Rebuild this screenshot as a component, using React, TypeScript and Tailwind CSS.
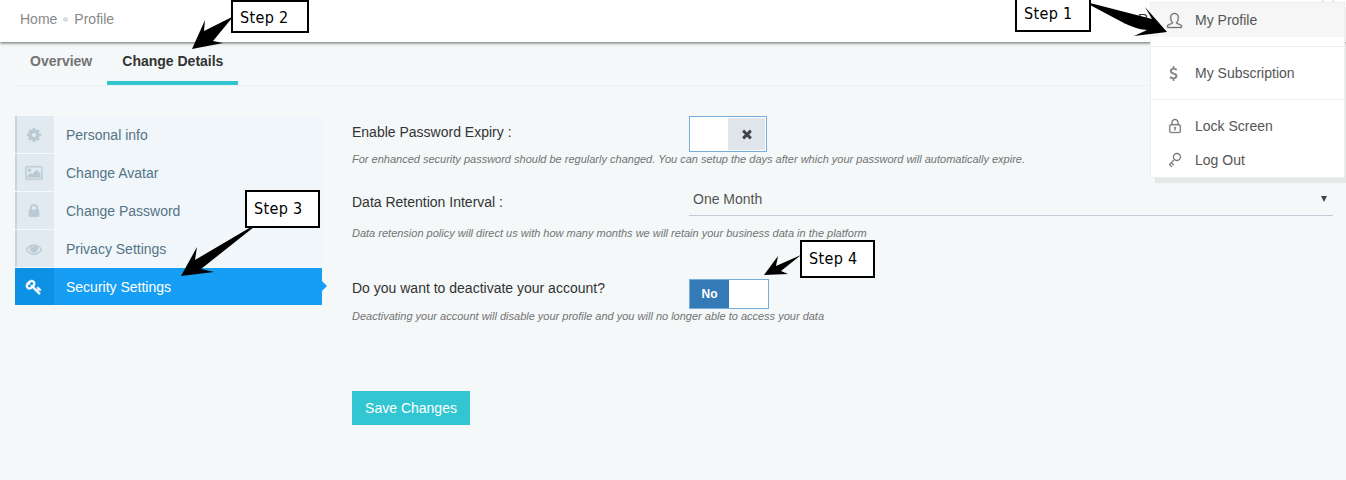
import React from "react";
import { SlUser, SlLock, SlKey } from "react-icons/sl";

const GLYPHS = {
  cog: "M1152 896q0-106-75-181t-181-75-181 75-75 181 75 181 181 75 181-75 75-181zm512-109v222q0 12-8 23t-20 13l-185 28q-19 54-39 91 35 50 107 138 10 12 10 25t-9 23q-27 37-99 108t-94 71q-12 0-26-9l-138-108q-44 23-91 38-16 136-29 186-7 28-36 28h-222q-14 0-24.5-8.5t-11.5-21.5l-28-184q-49-16-90-37l-141 107q-10 9-25 9-14 0-25-11-126-114-165-168-7-10-7-23 0-12 8-23 15-21 51-66.5t54-70.5q-27-50-41-99l-183-27q-13-2-21-12.5t-8-23.5v-222q0-12 8-23t19-13l186-28q14-46 39-92-40-57-107-138-10-12-10-24 0-10 9-23 26-36 98.5-107.5t94.5-71.5q13 0 26 10l138 107q44-23 91-38 16-136 29-186 7-28 36-28h222q14 0 24.5 8.5t11.5 21.5l28 184q49 16 90 37l142-107q9-9 24-9 13 0 25 10 129 119 165 170 7 8 7 22 0 12-8 23-15 21-51 66.5t-54 70.5q26 50 41 98l183 28q13 2 21 12.5t8 23.5z",
  image: "M576 576q0 80-56 136t-136 56-136-56-56-136 56-136 136-56 136 56 56 136zm1024 384v448h-1408v-192l320-320 160 160 512-512zm96-704h-1600q-13 0-22.5 9.5t-9.5 22.5v1216q0 13 9.5 22.5t22.5 9.5h1600q13 0 22.5-9.5t9.5-22.5v-1216q0-13-9.5-22.5t-22.5-9.5zm160 32v1216q0 66-47 113t-113 47h-1600q-66 0-113-47t-47-113v-1216q0-66 47-113t113-47h1600q66 0 113 47t47 113z",
  lock: "M640 768h512v-192q0-106-75-181t-181-75-181 75-75 181v192zm832 96v576q0 40-28 68t-68 28h-960q-40 0-68-28t-28-68v-576q0-40 28-68t68-28h32v-192q0-184 132-316t316-132 316 132 132 316v192h32q40 0 68 28t28 68z",
  eye: "M1664 960q-152-236-381-353 61 104 61 225 0 185-131.5 316.5t-316.5 131.5-316.5-131.5-131.5-316.5q0-121 61-225-229 117-381 353 133 205 333.5 326.5t434.5 121.5 434.5-121.5 333.5-326.5zm-720-384q0-20-14-34t-34-14q-125 0-214.5 89.5t-89.5 214.5q0 20 14 34t34 14 34-14 14-34q0-86 61-147t147-61q20 0 34-14t14-34zm848 384q0 34-20 69-140 230-376.5 368.5t-499.5 138.5-499.5-139-376.5-368q-20-35-20-69t20-69q140-229 376.5-368t499.5-139 499.5 139 376.5 368q20 35 20 69z",
  key: "M832 512q0-80-56-136t-136-56-136 56-56 136q0 42 19 83-41-19-83-19-80 0-136 56t-56 136 56 136 136 56 136-56 56-136q0-42-19-83 41 19 83 19 80 0 136-56t56-136zm851 704q0 17-49 66t-66 49q-9 0-28.5-16t-36.5-33-38.5-40-24.5-26l-96 96 220 220q28 28 28 68 0 42-39 81t-81 39q-40 0-68-28l-671-671q-176 131-365 131-163 0-265.5-102.5t-102.5-265.5q0-160 95-313t248-248 313-95q163 0 265.5 102.5t102.5 265.5q0 189-131 365l355 355 96-96q-3-3-26-24.5t-40-38.5-33-36.5-16-28.5q0-17 49-66t66-49q13 0 23 10 6 6 46 44.5t82 79.5 86.5 86 73 78 28.5 41z",
  times: "M1490 1322q0 40-28 68l-136 136q-28 28-68 28t-68-28l-294-294-294 294q-28 28-68 28t-68-28l-136-136q-28-28-28-68t28-68l294-294-294-294q-28-28-28-68t28-68l136-136q28-28 68-28t68 28l294 294 294-294q28-28 68-28t68 28l136 136q28 28 28 68t-28 68l-294 294 294 294q28 28 28 68z",
  dollar: "M1362 1185q0 153-99.5 263.5t-258.5 136.5v175q0 14-9 23t-23 9h-135q-13 0-22.5-9.5t-9.5-22.5v-175q-66-9-127.5-31t-101.5-44.5-74-48-46.5-37.5-17.5-18q-17-21-2-41l103-135q7-10 23-12 15-2 24 9l2 2q113 99 243 125 37 8 74 8 81 0 142.5-43t61.5-122q0-28-15-53t-33.5-42-58.5-37.5-66-32-80-32.5q-39-16-61.5-25t-61.5-26.5-62.5-31-56.5-35.5-53.5-42.5-43.5-49-35.5-58-21-66.5-8.5-78q0-138 98-242t255-134v-180q0-13 9.5-22.5t22.5-9.5h135q14 0 23 9t9 23v176q57 6 110.5 23t87 33.5 63.5 37.5 39 29 15 14q17 18 5 38l-81 146q-8 15-23 16-14 3-27-7-3-3-14.5-12t-39-26.5-58.5-32-74.5-26-85.5-11.5q-95 0-155 43t-60 111q0 26 8.5 48t29.5 41.5 39.5 33 56 31 60.5 27 70 27.5q53 20 81 31.5t76 35 75.5 42.5 62 50 53 63.5 31.5 76.5 13 94z",
};

function Glyph({ name, className }: { name: keyof typeof GLYPHS; className: string }) {
  return (
    <svg viewBox="0 0 1792 1792" className={`${className} overflow-visible`} fill="currentColor">
      <path d={GLYPHS[name]} />
    </svg>
  );
}

const NAV: { label: string; icon: keyof typeof GLYPHS; active?: boolean }[] = [
  { label: "Personal info", icon: "cog" },
  { label: "Change Avatar", icon: "image" },
  { label: "Change Password", icon: "lock" },
  { label: "Privacy Settings", icon: "eye" },
  { label: "Security Settings", icon: "key", active: true },
];

function SideNav() {
  return (
    <ul className="flex w-[307px] shrink-0 flex-col gap-px">
      {NAV.map((n) => (
        <li
          key={n.label}
          className={`relative flex h-[37px] items-center ${n.active ? "bg-[#169ef4] text-white" : "bg-[#f0f6fa] text-[#557386]"}`}
        >
          <span
            className={`flex h-full w-[39px] items-center justify-center border-l-2 pr-[3px] ${
              n.active ? "border-[#0c91e5] bg-[#0c91e5]" : "border-[#c4d5df] bg-[#e0eaf0] text-[#b9cad5]"
            }`}
          >
            <Glyph name={n.icon} className={n.active ? "size-4 stroke-white [stroke-width:70]" : "size-4 stroke-[#b9cad5] [stroke-width:30]"} />
          </span>
          <span className="pl-3">{n.label}</span>
          {n.active && (
            <svg className="absolute left-full top-[13px] h-[10px] w-[5px]" viewBox="0 0 5 10">
              <path d="M0 0L5 5L0 10Z" fill="#169ef4" />
            </svg>
          )}
        </li>
      ))}
    </ul>
  );
}

function Hint({ children }: { children: React.ReactNode }) {
  return <p className="text-[11px] leading-4 italic text-[#737373]">{children}</p>;
}

function UserMenu() {
  return (
    <>
      <svg className="absolute left-[1320px] top-0 h-[3px] w-4" viewBox="0 0 16 3">
        <path d="M1 3L4 0H12L15 3Z" fill="#fff" />
        <path d="M1 3L4 0M12 0L15 3" stroke="#ccc" fill="none" />
      </svg>
      <div className="absolute left-[1150px] top-[2px] flex h-[176px] w-[195px] flex-col border border-[#eee] bg-white text-[#555] shadow-[5px_5px_rgba(102,102,102,0.1)]">
        <div className="flex h-[34px] items-center bg-[#f6f6f6] pl-4">
          <SlUser className="size-[15px] mr-px overflow-visible text-[#6f6f6f] [stroke-width:25]" />
          <span className="pl-3">My Profile</span>
        </div>
        <div className="my-[9px] h-px shrink-0 bg-[#f0f0f0]" />
        <div className="flex h-[34px] items-center pl-4">
          <Glyph name="dollar" className="-ml-px mr-px size-[15px] text-[#888] mx-0" />
          <span className="pl-[13px]">My Subscription</span>
        </div>
        <div className="my-[9px] h-px shrink-0 bg-[#f0f0f0]" />
        <div className="flex h-[34px] items-center pl-4">
          <SlLock className="size-[14px] mx-px overflow-visible text-[#6f6f6f] [stroke-width:25]" />
          <span className="pl-3">Lock Screen</span>
        </div>
        <div className="flex h-[34px] items-center pl-4">
          <SlKey className="size-[14px] mx-px overflow-visible text-[#6f6f6f] [stroke-width:25]" />
          <span className="pl-3">Log Out</span>
        </div>
      </div>
    </>
  );
}

const STEP =
  "absolute border-2 border-black bg-white pl-[7px] text-[16px] tracking-[0.35px] text-black whitespace-nowrap [font-family:'DejaVu_Sans_Condensed','DejaVu_Sans',sans-serif] [font-stretch:condensed]";

function Callouts() {
  return (
    <>
      <svg className="pointer-events-none absolute left-0 top-0 h-[480px] w-[1346px]" viewBox="0 0 1346 480">
        <path d="M232 17L204 31L205 20L192 49L223 43L213 41L232 18Z" />
        <path d="M1090 3L1152 19L1145 7L1167 32L1134 36L1147 30Q1135 29 1122 22L1090 5Z" />
        <path d="M251 227L195 260L197 247L181 276L214 272L201 269L254 227Z" />
        <path d="M801 255L776 266L778 256L764 275L788 274L781 271Z" />
      </svg>
      <div className={`${STEP} left-[231px] top-0 h-[33px] w-[78px] leading-[31px]`}>Step 2</div>
      <div className={`${STEP} left-[1015px] top-[-5px] h-[37px] w-[76px] leading-[34px]`}>Step 1</div>
      <div className={`${STEP} left-[245px] top-[190px] h-[38px] w-[75px] leading-[33px]`}>Step 3</div>
      <div className={`${STEP} left-[800px] top-[240px] h-[38px] w-[75px] leading-[33px]`}>Step 4</div>
    </>
  );
}

export default function App() {
  return (
    <div className="relative h-[480px] w-[1346px] overflow-hidden bg-[#f4f8f9] text-[14px] leading-5 text-[#333] [font-family:'Liberation_Sans',Arial,sans-serif]">
      <header className="relative flex h-[42px] items-center bg-white pb-1 pl-5 text-[#888] shadow-[0_1px_3px_0px_rgba(50,50,50,0.75)]">
        <span>Home</span>
        <span className="mx-[6px] size-[5px] rounded-full bg-[#ddd]" />
        <span>Profile</span>
        <span className="absolute left-[1121px] top-[9px] text-[#333]">★ R</span>
      </header>
      <nav className="mx-[15px] flex h-[44px] border-b border-[#eef1f2] font-bold">
        <div className="h-[43px] px-[15px] pt-[9px] text-[#737373]">Overview</div>
        <div className="h-[43px] border-b-4 border-[#32c5d2] px-[15px] pt-[9px]">Change Details</div>
      </nav>
      <main className="flex gap-[30px] pl-[15px] pr-[13px] pt-[30px]">
        <SideNav />
        <form className="flex flex-1 flex-col items-stretch">
          <div className="flex h-[35px]">
            <label className="w-[337px] pt-[6px]">Enable Password Expiry :</label>
            <div className="flex h-9 w-[78px] border border-[#77addb] bg-white p-px pl-[38px]">
              <span className="flex flex-1 items-center justify-center bg-[#e0e5eb] text-[#444]">
                <Glyph name="times" className="size-[14px]" />
              </span>
            </div>
          </div>
          <Hint>For enhanced security password should be regularly changed. You can setup the days after which your password will automatically expire.</Hint>
          <div className="mt-[15px] flex h-[34px]">
            <label className="w-[337px] pt-[10px]">Data Retention Interval :</label>
            <div className="flex flex-1 justify-between border-b border-[#c2cad8] pl-1 pr-[5px] pt-[7px] text-[#555]">
              <span>One Month</span>
              <svg className="mt-[7px] h-[6px] w-2" viewBox="0 0 8 6">
                <path d="M1 0H7L4 6Z" fill="#444" />
              </svg>
            </div>
          </div>
          <div className="mt-[9px]">
            <Hint>Data retension policy will direct us with how many months we will retain your business data in the platform</Hint>
          </div>
          <div className="mt-[37px] flex h-[30px]">
            <label className="w-[337px]">Do you want to deactivate your account?</label>
            <div className="mt-px flex h-[30px] w-20 shrink-0 border border-[#77addb] bg-white text-xs font-bold text-white">
              <span className="flex w-[39px] items-center justify-center bg-[#337ab7]">No</span>
            </div>
          </div>
          <Hint>Deactivating your account will disable your profile and you will no longer able to access your data</Hint>
          <button type="button" className="mt-[67px] h-[34px] w-[118px] bg-[#32c5d2] text-white">
            Save Changes
          </button>
        </form>
      </main>
      <UserMenu />
      <Callouts />
    </div>
  );
}
